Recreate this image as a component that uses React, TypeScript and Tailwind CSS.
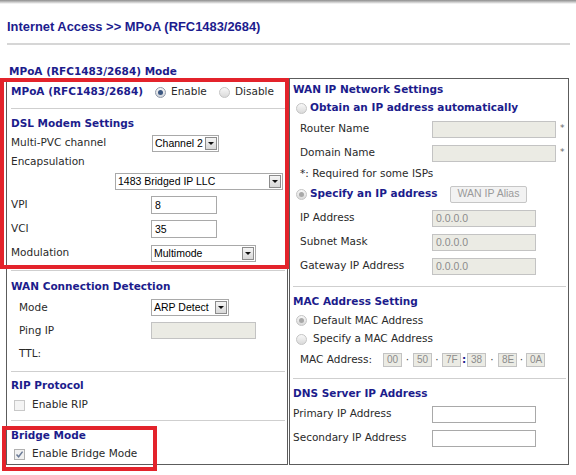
import React from "react";

const body = "font-['DejaVu_Sans',Verdana,sans-serif] text-[10.5px] text-[#2a2a2a]";
const arial = "font-['Liberation_Sans',Arial,sans-serif]";
const head = "font-['DejaVu_Sans',Verdana,sans-serif] font-bold text-[10.5px] text-[#1c1c8c]";

function Radio({ checked = false, tone = "gray" }: { checked?: boolean; tone?: "blue" | "gray" }) {
  return (
    <span
      className={
        tone === "blue"
          ? "inline-flex w-[11px] h-[11px] shrink-0 items-center justify-center rounded-full border border-[#8f98a8] bg-linear-to-b from-[#f6f6f6] to-[#d2d6dc]"
          : "inline-flex w-[11px] h-[11px] shrink-0 items-center justify-center rounded-full border border-[#c4c4c4] bg-linear-to-b from-[#f8f8f8] to-[#dadada]"
      }
    >
      {checked && (
        <span
          className={
            tone === "blue"
              ? "w-[5px] h-[5px] rounded-full bg-[#3b5680]"
              : "w-[5px] h-[5px] rounded-full bg-[#a8a8a8]"
          }
        />
      )}
    </span>
  );
}

function Check({ checked = false }: { checked?: boolean }) {
  return (
    <span
      className={
        checked
          ? "inline-flex w-[11px] h-[11px] shrink-0 items-center justify-center border border-[#b0b0b0] bg-[#f0f0f0]"
          : "inline-flex w-[11px] h-[11px] shrink-0 items-center justify-center border border-[#c8c8c8] bg-[#f4f4f4]"
      }
    >
      {checked && (
        <svg width="9" height="9" viewBox="0 0 9 9">
          <path d="M1.5 4.5 L3.6 6.8 L7.6 1.6" fill="none" stroke="#6a7a96" strokeWidth="1.5" />
        </svg>
      )}
    </span>
  );
}

function Select({ value, className }: { value: string; className: string }) {
  return (
    <div className={`flex items-center h-[17px] border border-[#a9a9a9] bg-white ${className}`}>
      <span className={`flex-1 pl-[2px] ${arial} text-[10.5px] leading-none text-black whitespace-nowrap`}>
        {value}
      </span>
      <span className="mr-[1px] flex w-[12px] h-[13px] shrink-0 items-center justify-center border border-[#8c8c8c] bg-linear-to-b from-[#f5f5f5] to-[#d8d8d8]">
        <span className="w-0 h-0 border-l-[3px] border-r-[3px] border-t-[3px] border-l-transparent border-r-transparent border-t-[#111]" />
      </span>
    </div>
  );
}

function Input({ value = "", disabled = false, className }: { value?: string; disabled?: boolean; className: string }) {
  return (
    <div
      className={`flex items-center border pl-[3px] ${arial} text-[10.5px] leading-none whitespace-nowrap ${
        disabled ? "border-[#c3c3c3] bg-[#ebebe4] text-[#8c8c8c]" : "border-[#a9a9a9] bg-white text-black"
      } ${className}`}
    >
      {value}
    </div>
  );
}

const mac: { v: string; sep?: string; sw?: string }[] = [
  { v: "00", sep: "·", sw: "w-[11px]" },
  { v: "50", sep: "·", sw: "w-[10px]" },
  { v: "7F", sep: ":", sw: "w-[6px]" },
  { v: "38", sep: "·", sw: "w-[12px]" },
  { v: "8E", sep: "·", sw: "w-[9px]" },
  { v: "0A" },
];

export default function App() {
  return (
    <div className={`relative w-[576px] h-[475px] overflow-hidden bg-white ${body}`}>
      <div className="h-[4px] bg-linear-to-b from-[#8e8e8e] to-white" />
      <div className={`mt-[15px] h-[15px] pl-[7px] leading-[15px] ${arial} font-bold text-[12.9px] text-[#1c1c8e]`}>
        Internet Access &gt;&gt; MPoA (RFC1483/2684)
      </div>
      <div className="mt-[9px] ml-[7px] w-[563px] h-[2px] bg-[#d6d6d6]" />
      <div className={`mt-[19px] h-[14px] pl-[9px] leading-[14px] ${head}`}>MPoA (RFC1483/2684) Mode</div>

      <div className="flex ml-[6px] gap-[1px]">
        {/* Left cell */}
        <div className="w-[282px] h-[387px] border border-[#5c5c5c] px-[4px] pt-[4px]">
          <div className="flex items-center h-[18px]">
            <span className={`${head} w-[144px]`}>MPoA (RFC1483/2684)</span>
            <Radio checked tone="blue" />
            <span className="pl-[5px] w-[53px]">Enable</span>
            <Radio />
            <span className="pl-[5px]">Disable</span>
          </div>
          <div className="mt-[7px] h-px bg-[#cfcfcf] -mr-[2px]" />
          <div className={`mt-[6px] h-[18px] flex items-center ${head}`}>DSL Modem Settings</div>
          <div className="mt-[1px] h-[18px] flex items-center">
            <span className="w-[141px]">Multi-PVC channel</span>
            <Select value="Channel 2" className="w-[67px]" />
          </div>
          <div className="mt-[1px] h-[18px] flex items-center">Encapsulation</div>
          <div className="mt-[1px] h-[18px] flex items-center justify-end">
            <Select value="1483 Bridged IP LLC" className="w-[168px]" />
          </div>
          <div className="mt-[3px] h-[24px] flex items-center">
            <span className="w-[140px]">VPI</span>
            <Input value="8" className="w-[66px] h-[18px]" />
          </div>
          <div className="h-[24px] flex items-center">
            <span className="w-[140px]">VCI</span>
            <Input value="35" className="w-[66px] h-[18px]" />
          </div>
          <div className="h-[24px] flex items-center">
            <span className="w-[140px]">Modulation</span>
            <Select value="Multimode" className="w-[105px]" />
          </div>
          <div className="mt-[5px] h-px bg-[#cfcfcf] -mr-[2px]" />
          <div className={`mt-[7px] h-[18px] flex items-center ${head}`}>WAN Connection Detection</div>
          <div className="h-[23px] flex items-center">
            <span className="w-[140px] pl-[8px]">Mode</span>
            <Select value="ARP Detect" className="w-[78px]" />
          </div>
          <div className="h-[23px] flex items-center">
            <span className="w-[140px] pl-[8px]">Ping IP</span>
            <Input disabled className="w-[105px] h-[17px]" />
          </div>
          <div className="h-[23px] flex items-center">
            <span className="w-[140px] pl-[8px]">TTL:</span>
          </div>
          <div className="mt-[6px] h-px bg-[#cfcfcf] -mr-[2px]" />
          <div className={`mt-[5px] h-[18px] flex items-center ${head}`}>RIP Protocol</div>
          <div className="mt-[1px] h-[18px] flex items-center pl-[3px]">
            <Check />
            <span className="pl-[7px]">Enable RIP</span>
          </div>
          <div className="mt-[6px] h-px bg-[#cfcfcf] -mr-[2px]" />
          <div className={`mt-[6px] h-[18px] flex items-center ${head}`}>Bridge Mode</div>
          <div className="h-[18px] flex items-center pl-[3px]">
            <Check checked />
            <span className="pl-[7px]">Enable Bridge Mode</span>
          </div>
        </div>

        {/* Right cell */}
        <div className="w-[280px] h-[387px] border border-[#5c5c5c] pl-[3px] pr-[2px] pt-[2px]">
          <div className={`h-[18px] flex items-center ${head}`}>WAN IP Network Settings</div>
          <div className="h-[18px] flex items-center pl-[3px]">
            <Radio />
            <span className={`ml-[3px] ${head} text-[#1a1aa0]`}>Obtain an IP address automatically</span>
          </div>
          <div className="h-[24px] flex items-center">
            <span className="w-[139px] pl-[7px]">Router Name</span>
            <Input disabled className="w-[124px] h-[17px]" />
            <span className="ml-[4px] text-[9px] text-[#666]">*</span>
          </div>
          <div className="h-[24px] flex items-center">
            <span className="w-[139px] pl-[7px]">Domain Name</span>
            <Input disabled className="w-[124px] h-[17px]" />
            <span className="ml-[4px] text-[9px] text-[#666]">*</span>
          </div>
          <div className="h-[18px] flex items-center pl-[7px]">*: Required for some ISPs</div>
          <div className="h-[22px] flex items-center pl-[3px]">
            <Radio checked />
            <span className={`ml-[3px] w-[140px] ${head} text-[#1a1aa0]`}>Specify an IP address</span>
            <span
              className={`flex items-center justify-center w-[77px] h-[17px] rounded-[2px] border border-[#c6c6c6] bg-[#f2f2f2] ${arial} text-[10.5px] text-[#9a9a9a]`}
            >
              WAN IP Alias
            </span>
          </div>
          <div className="mt-[1px] h-[24px] flex items-center">
            <span className="w-[139px] pl-[7px]">IP Address</span>
            <Input disabled value="0.0.0.0" className="w-[104px] h-[17px]" />
          </div>
          <div className="h-[24px] flex items-center">
            <span className="w-[139px] pl-[7px]">Subnet Mask</span>
            <Input disabled value="0.0.0.0" className="w-[104px] h-[17px]" />
          </div>
          <div className="h-[24px] flex items-center">
            <span className="w-[139px] pl-[7px]">Gateway IP Address</span>
            <Input disabled value="0.0.0.0" className="w-[104px] h-[17px]" />
          </div>
          <div className="mt-[8px] h-px bg-[#cfcfcf]" />
          <div className={`mt-[6px] h-[18px] flex items-center ${head}`}>MAC Address Setting</div>
          <div className="h-[19px] flex items-center pl-[3px]">
            <Radio checked />
            <span className="ml-[6px]">Default MAC Address</span>
          </div>
          <div className="h-[18px] flex items-center pl-[3px]">
            <Radio />
            <span className="ml-[6px]">Specify a MAC Address</span>
          </div>
          <div className="mt-[2px] h-[20px] flex items-center">
            <span className="w-[90px] pl-[7px]">MAC Address:</span>
            {mac.map((m, i) => (
              <React.Fragment key={i}>
                <Input disabled value={m.v} className="w-[19px] h-[14px] pl-[2px] text-[10px]" />
                {m.sep && (
                  <span
                    className={
                      m.sep === ":"
                        ? `${m.sw} text-center font-bold text-[#1c1c8c]`
                        : `${m.sw} text-center text-[#444]`
                    }
                  >
                    {m.sep}
                  </span>
                )}
              </React.Fragment>
            ))}
          </div>
          <div className="mt-[8px] h-px bg-[#cfcfcf]" />
          <div className={`mt-[6px] h-[17px] flex items-center ${head}`}>DNS Server IP Address</div>
          <div className="h-[24px] flex items-center">
            <span className="w-[139px]">Primary IP Address</span>
            <Input className="w-[104px] h-[17px]" />
          </div>
          <div className="h-[24px] flex items-center">
            <span className="w-[139px]">Secondary IP Address</span>
            <Input className="w-[104px] h-[17px]" />
          </div>
        </div>
      </div>

      {/* red annotation boxes */}
      <div className="absolute left-[0px] top-[78px] w-[289px] h-[191px] border-[4px] border-[#e3232b]" />
      <div className="absolute left-[2px] top-[426px] w-[155px] h-[45px] border-[4px] border-[#e3232b]" />
    </div>
  );
}
